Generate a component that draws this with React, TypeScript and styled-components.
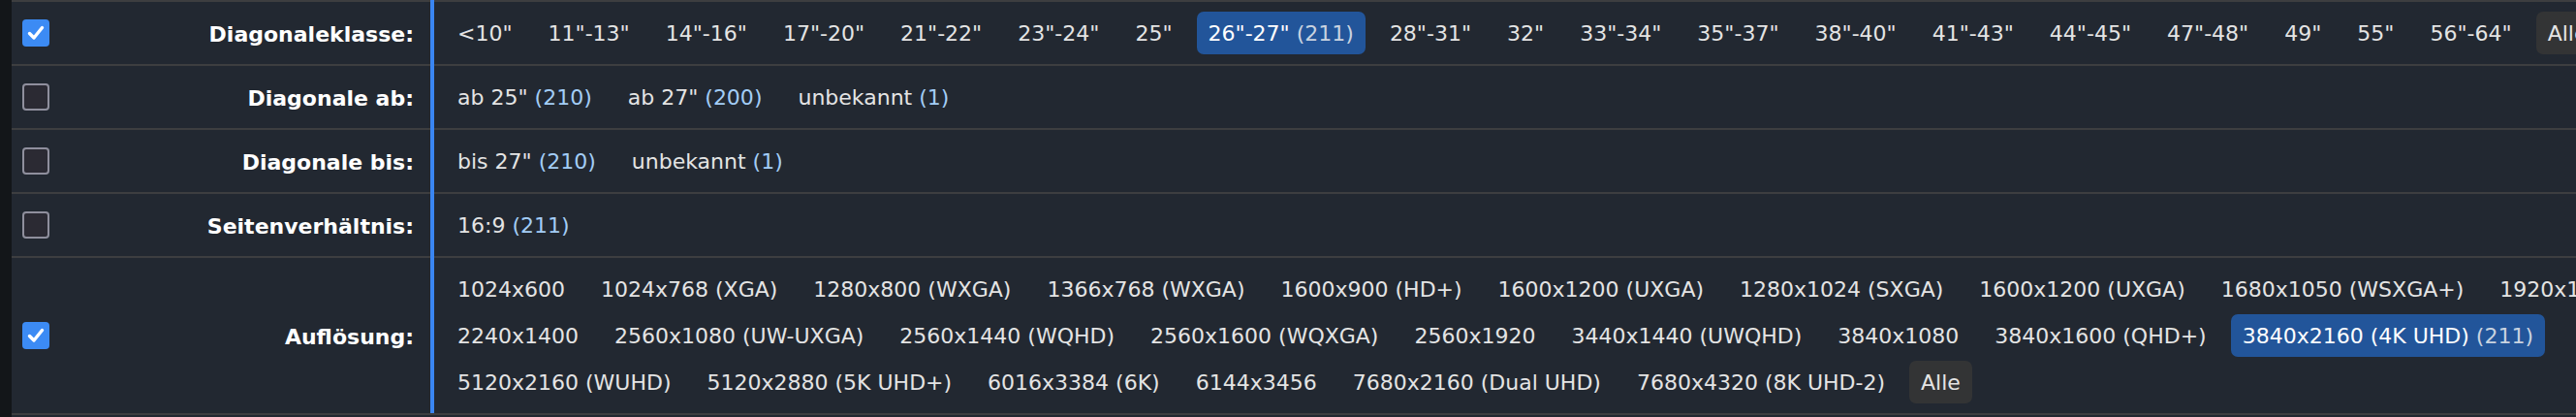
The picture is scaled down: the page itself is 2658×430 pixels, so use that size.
import React from 'react';
import styled, { createGlobalStyle } from 'styled-components';

const GlobalStyle = createGlobalStyle`
  html, body {
    margin: 0;
    padding: 0;
    overflow: hidden;
    background: #131619;
  }
`;

type FilterOption = {
  text: string;
  count?: number;
  selected?: boolean;
  all?: boolean;
};

type Filter = {
  label: string;
  checked: boolean;
  options: FilterOption[];
};

const opt = (text: string, count?: number, selected?: boolean): FilterOption => ({ text, count, selected });
const ALL: FilterOption = { text: 'Alle', all: true };

const filters: Filter[] = [
  {
    label: 'Diagonaleklasse:',
    checked: true,
    options: [
      opt('<10"'),
      opt('11"-13"'),
      opt('14"-16"'),
      opt('17"-20"'),
      opt('21"-22"'),
      opt('23"-24"'),
      opt('25"'),
      opt('26"-27"', 211, true),
      opt('28"-31"'),
      opt('32"'),
      opt('33"-34"'),
      opt('35"-37"'),
      opt('38"-40"'),
      opt('41"-43"'),
      opt('44"-45"'),
      opt('47"-48"'),
      opt('49"'),
      opt('55"'),
      opt('56"-64"'),
      ALL,
    ],
  },
  {
    label: 'Diagonale ab:',
    checked: false,
    options: [opt('ab 25"', 210), opt('ab 27"', 200), opt('unbekannt', 1)],
  },
  {
    label: 'Diagonale bis:',
    checked: false,
    options: [opt('bis 27"', 210), opt('unbekannt', 1)],
  },
  {
    label: 'Seitenverhältnis:',
    checked: false,
    options: [opt('16:9', 211)],
  },
  {
    label: 'Auflösung:',
    checked: true,
    options: [
      opt('1024x600'),
      opt('1024x768 (XGA)'),
      opt('1280x800 (WXGA)'),
      opt('1366x768 (WXGA)'),
      opt('1600x900 (HD+)'),
      opt('1600x1200 (UXGA)'),
      opt('1280x1024 (SXGA)'),
      opt('1600x1200 (UXGA)'),
      opt('1680x1050 (WSXGA+)'),
      opt('1920x1080 (FHD)'),
      opt('2240x1400'),
      opt('2560x1080 (UW-UXGA)'),
      opt('2560x1440 (WQHD)'),
      opt('2560x1600 (WQXGA)'),
      opt('2560x1920'),
      opt('3440x1440 (UWQHD)'),
      opt('3840x1080'),
      opt('3840x1600 (QHD+)'),
      opt('3840x2160 (4K UHD)', 211, true),
      opt('5120x2160 (WUHD)'),
      opt('5120x2880 (5K UHD+)'),
      opt('6016x3384 (6K)'),
      opt('6144x3456'),
      opt('7680x2160 (Dual UHD)'),
      opt('7680x4320 (8K UHD-2)'),
      ALL,
    ],
  },
];

const Page = styled.div`
  display: flex;
  min-height: 100vh;
  font-family: 'DejaVu Sans', Verdana, sans-serif;
`;

const SideStrip = styled.div`
  flex: 0 0 12px;
  background: #131619;
`;

const FilterTable = styled.div`
  flex: 0 0 2840px;
  background: #222831;
  display: flex;
  flex-direction: column;
`;

const FilterRowStyled = styled.div`
  display: grid;
  grid-template-columns: 60px 376px 1fr;
  border-top: 2px solid #3d3e40;

  &:last-child {
    border-bottom: 2px solid #3d3e40;
  }
`;

const CheckCell = styled.div`
  display: flex;
  align-items: center;
  padding-left: 11px;
`;

const CheckBox = styled.span<{ $checked: boolean }>`
  display: flex;
  align-items: center;
  justify-content: center;
  box-sizing: border-box;
  width: 28px;
  height: 28px;
  border-radius: 4px;
  background: ${(p) => (p.$checked ? '#3c8bf4' : '#2b2a33')};
  border: ${(p) => (p.$checked ? 'none' : '2px solid #8f8f9d')};
`;

const LabelCell = styled.div`
  display: flex;
  align-items: center;
  justify-content: flex-end;
  margin-top: -2px;
  padding: 4px 17px 0 0;
  border-right: 4px solid #3a86f2;
  font-size: 22px;
  font-weight: bold;
  color: #ffffff;
  white-space: nowrap;
`;

const OptionsCell = styled.div`
  display: flex;
  flex-wrap: wrap;
  align-content: center;
  column-gap: 13px;
  row-gap: 4px;
  padding: 10px 12px;
`;

const OptionStyled = styled.span<{ $selected?: boolean; $all?: boolean }>`
  box-sizing: border-box;
  height: 44px;
  padding: 2px 12px 0;
  line-height: 42px;
  border-radius: 7px;
  font-size: 22px;
  white-space: nowrap;
  color: ${(p) => (p.$selected ? '#ffffff' : '#e4e4e4')};
  background: ${(p) => (p.$selected ? '#22559a' : p.$all ? '#333435' : 'transparent')};
  cursor: pointer;
`;

const Count = styled.span<{ $selected?: boolean }>`
  color: ${(p) => (p.$selected ? '#c9d3e0' : '#a3cdf6')};
`;

function CheckMark() {
  return (
    <svg width="22" height="22" viewBox="0 0 22 22">
      <path
        d="M4.5 11.5 L9 16 L17.5 5.5"
        fill="none"
        stroke="#ffffff"
        strokeWidth="3.4"
        strokeLinecap="round"
        strokeLinejoin="round"
      />
    </svg>
  );
}

function FilterRow({ filter }: { filter: Filter }) {
  return (
    <FilterRowStyled>
      <CheckCell>
        <CheckBox $checked={filter.checked}>{filter.checked && <CheckMark />}</CheckBox>
      </CheckCell>
      <LabelCell>{filter.label}</LabelCell>
      <OptionsCell>
        {filter.options.map((o, i) => (
          <OptionStyled key={i} $selected={o.selected} $all={o.all}>
            {o.text}
            {o.count !== undefined && <Count $selected={o.selected}> ({o.count})</Count>}
          </OptionStyled>
        ))}
      </OptionsCell>
    </FilterRowStyled>
  );
}

export default function App() {
  return (
    <>
      <GlobalStyle />
      <Page>
        <SideStrip />
        <FilterTable>
          {filters.map((f) => (
            <FilterRow key={f.label} filter={f} />
          ))}
        </FilterTable>
      </Page>
    </>
  );
}
